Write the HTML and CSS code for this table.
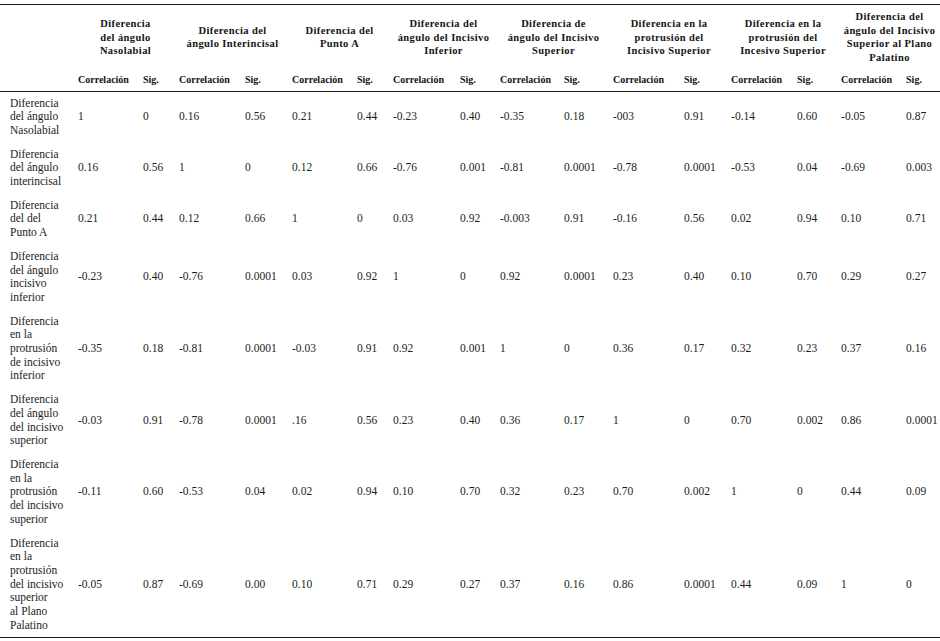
FILE: index.html
```html
<!DOCTYPE html>
<html lang="es">
<head>
<meta charset="utf-8">
<title>Correlaciones</title>
<link rel="stylesheet" href="styles.css">
</head>
<body>
<table class="corr">
  <colgroup>
    <col class="w-label">
    <col class="w65"><col class="w36">
    <col class="w66"><col class="w47">
    <col class="w65"><col class="w36">
    <col class="w67"><col class="w40">
    <col class="w64"><col class="w49">
    <col class="w71"><col class="w47">
    <col class="w66"><col class="w44">
    <col class="w65"><col class="w38">
  </colgroup>
  <thead>
    <tr class="groups">
      <th></th>
      <th colspan="2">Diferencia<br>del ángulo<br>Nasolabial</th>
      <th colspan="2">Diferencia del<br>ángulo Interincisal</th>
      <th colspan="2">Diferencia del<br>Punto A</th>
      <th colspan="2">Diferencia del<br>ángulo del Incisivo<br>Inferior</th>
      <th colspan="2">Diferencia de<br>ángulo del Incisivo<br>Superior</th>
      <th colspan="2">Diferencia en la<br>protrusión del<br>Incisivo Superior</th>
      <th colspan="2">Diferencia en la<br>protrusión del<br>Incesivo Superior</th>
      <th colspan="2">Diferencia del<br>ángulo del Incisivo<br>Superior al Plano<br>Palatino</th>
    </tr>
    <tr class="sub">
      <th></th>
      <th>Correlación</th><th>Sig.</th>
      <th>Correlación</th><th>Sig.</th>
      <th>Correlación</th><th>Sig.</th>
      <th>Correlación</th><th>Sig.</th>
      <th>Correlación</th><th>Sig.</th>
      <th>Correlación</th><th>Sig.</th>
      <th>Correlación</th><th>Sig.</th>
      <th>Correlación</th><th>Sig.</th>
    </tr>
  </thead>
  <tbody>
    <tr>
      <td class="label">Diferencia<br>del ángulo<br>Nasolabial</td>
      <td>1</td><td>0</td><td>0.16</td><td>0.56</td><td>0.21</td><td>0.44</td><td>-0.23</td><td>0.40</td><td>-0.35</td><td>0.18</td><td>-003</td><td>0.91</td><td>-0.14</td><td>0.60</td><td>-0.05</td><td>0.87</td>
    </tr>
    <tr>
      <td class="label">Diferencia<br>del ángulo<br>interincisal</td>
      <td>0.16</td><td>0.56</td><td>1</td><td>0</td><td>0.12</td><td>0.66</td><td>-0.76</td><td>0.001</td><td>-0.81</td><td>0.0001</td><td>-0.78</td><td>0.0001</td><td>-0.53</td><td>0.04</td><td>-0.69</td><td>0.003</td>
    </tr>
    <tr>
      <td class="label">Diferencia<br>del del<br>Punto A</td>
      <td>0.21</td><td>0.44</td><td>0.12</td><td>0.66</td><td>1</td><td>0</td><td>0.03</td><td>0.92</td><td>-0.003</td><td>0.91</td><td>-0.16</td><td>0.56</td><td>0.02</td><td>0.94</td><td>0.10</td><td>0.71</td>
    </tr>
    <tr>
      <td class="label">Diferencia<br>del ángulo<br>incisivo<br>inferior</td>
      <td>-0.23</td><td>0.40</td><td>-0.76</td><td>0.0001</td><td>0.03</td><td>0.92</td><td>1</td><td>0</td><td>0.92</td><td>0.0001</td><td>0.23</td><td>0.40</td><td>0.10</td><td>0.70</td><td>0.29</td><td>0.27</td>
    </tr>
    <tr>
      <td class="label">Diferencia<br>en la<br>protrusión<br>de incisivo<br>inferior</td>
      <td>-0.35</td><td>0.18</td><td>-0.81</td><td>0.0001</td><td>-0.03</td><td>0.91</td><td>0.92</td><td>0.001</td><td>1</td><td>0</td><td>0.36</td><td>0.17</td><td>0.32</td><td>0.23</td><td>0.37</td><td>0.16</td>
    </tr>
    <tr>
      <td class="label">Diferencia<br>del ángulo<br>del incisivo<br>superior</td>
      <td>-0.03</td><td>0.91</td><td>-0.78</td><td>0.0001</td><td>.16</td><td>0.56</td><td>0.23</td><td>0.40</td><td>0.36</td><td>0.17</td><td>1</td><td>0</td><td>0.70</td><td>0.002</td><td>0.86</td><td>0.0001</td>
    </tr>
    <tr>
      <td class="label">Diferencia<br>en la<br>protrusión<br>del incisivo<br>superior</td>
      <td>-0.11</td><td>0.60</td><td>-0.53</td><td>0.04</td><td>0.02</td><td>0.94</td><td>0.10</td><td>0.70</td><td>0.32</td><td>0.23</td><td>0.70</td><td>0.002</td><td>1</td><td>0</td><td>0.44</td><td>0.09</td>
    </tr>
    <tr>
      <td class="label">Diferencia<br>en la<br>protrusión<br>del incisivo<br>superior<br>al Plano<br>Palatino</td>
      <td>-0.05</td><td>0.87</td><td>-0.69</td><td>0.00</td><td>0.10</td><td>0.71</td><td>0.29</td><td>0.27</td><td>0.37</td><td>0.16</td><td>0.86</td><td>0.0001</td><td>0.44</td><td>0.09</td><td>1</td><td>0</td>
    </tr>
  </tbody>
</table>
</body>
</html>
```
FILE: styles.css
```css
html, body {
  margin: 0;
  padding: 0;
  background: #ffffff;
}

body {
  padding-top: 4px;
  font-family: "Liberation Serif", "Times New Roman", serif;
  color: #1c1c1c;
}

.corr {
  width: 940px;
  table-layout: fixed;
  border-collapse: collapse;
  border-top: 1px solid #1a1a1a;
  border-bottom: 1px solid #1a1a1a;
}

.w-label { width: 74px; }
.w36 { width: 36px; }
.w38 { width: 38px; }
.w40 { width: 40px; }
.w44 { width: 44px; }
.w47 { width: 47px; }
.w49 { width: 49px; }
.w64 { width: 64px; }
.w65 { width: 65px; }
.w66 { width: 66px; }
.w67 { width: 67px; }
.w71 { width: 71px; }

.corr th,
.corr td {
  padding: 0 0 0 4px;
  white-space: nowrap;
  vertical-align: middle;
  text-align: left;
}

.groups th {
  padding: 5px 2px 3px 4px;
  font-size: 10.5px;
  letter-spacing: 0.4px;
  line-height: 13.7px;
  font-weight: bold;
  text-align: center;
  color: #151515;
}

.sub th {
  padding: 5px 0 4px 4px;
  font-size: 10px;
  line-height: 13.7px;
  font-weight: bold;
  color: #151515;
  border-bottom: 1px solid #1a1a1a;
}

.corr td {
  padding: 5px 0 5px 4px;
  font-size: 11.5px;
  line-height: 13.7px;
}

.corr td.label {
  padding-left: 10px;
}
```
